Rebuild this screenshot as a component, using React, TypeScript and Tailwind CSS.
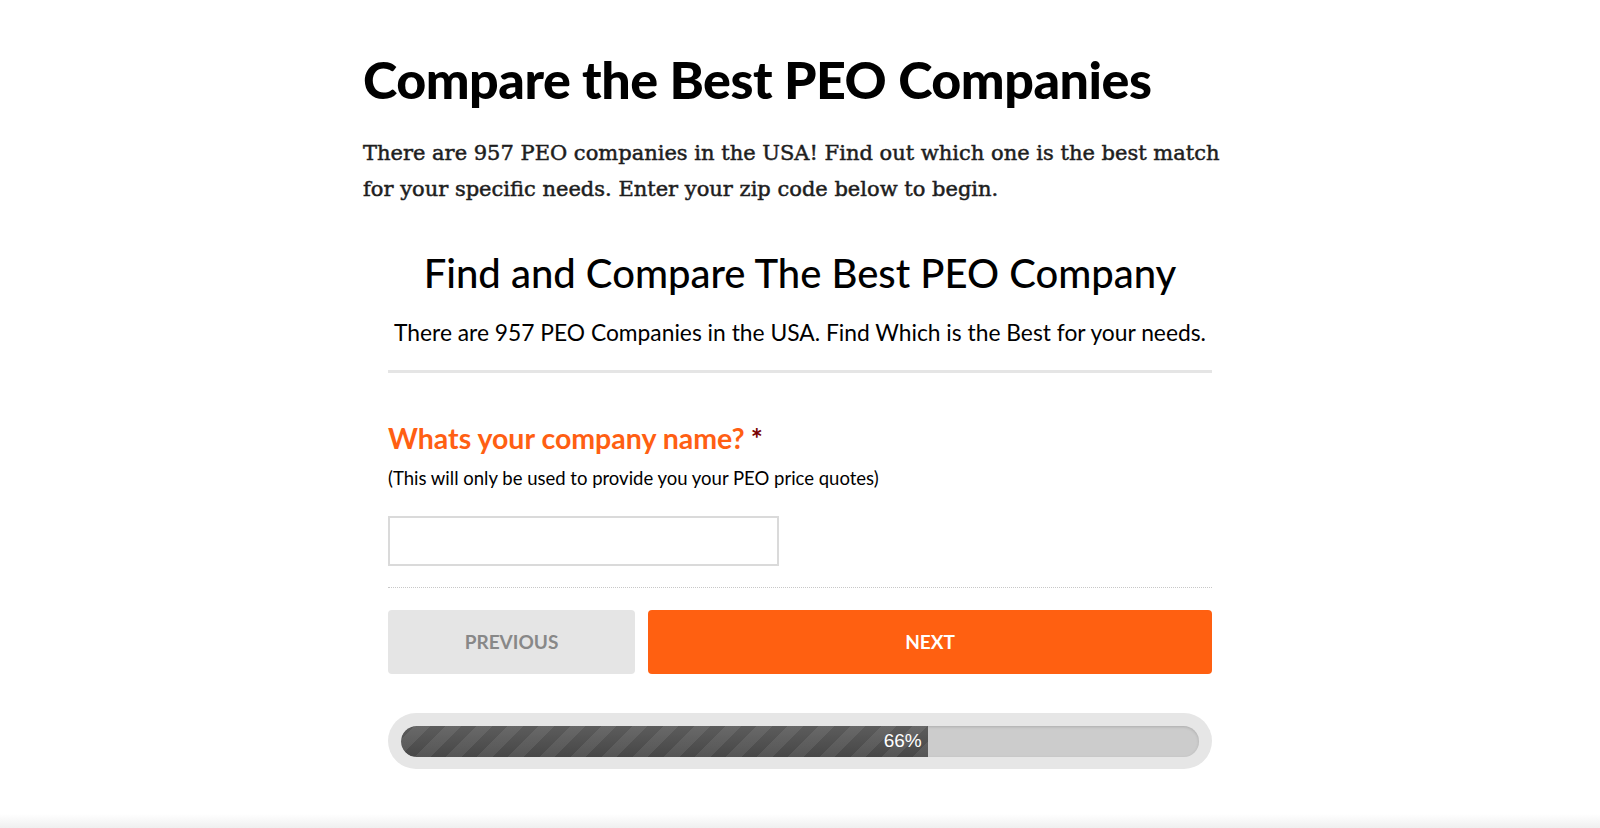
import React from "react";

export default function App() {
  return (
    <div className="min-h-[828px] h-[828px] bg-white flex flex-col overflow-hidden">
      <div className="w-[874px] mx-auto pt-[48px]">
        <h1 className="font-['Lato',sans-serif] font-black text-[52px] leading-[62px] text-black tracking-[-0.5px]">
          Compare the Best PEO Companies
        </h1>
        <p className="mt-[25px] font-['DejaVu_Serif',serif] text-[21px] leading-[36px] text-[#1e1e1e] [-webkit-text-stroke:0.5px_#1e1e1e]">
          There are 957 PEO companies in the USA! Find out which one is the best match for your specific needs. Enter your zip code below to begin.
        </p>
      </div>

      <div className="w-[824px] mx-auto mt-[42px] font-['Lato',sans-serif]">
        <h2 className="text-center text-[40px] leading-[48px] font-medium text-black">
          Find and Compare The Best PEO Company
        </h2>
        <p className="text-center mt-[20px] text-[22.8px] leading-[30px] text-black">
          There are 957 PEO Companies in the USA. Find Which is the Best for your needs.
        </p>
        <div className="mt-[23px] h-[3px] bg-[#e5e5e5]" />

        <div className="mt-[47px]">
          <div className="text-[28.5px] leading-[36px] font-bold text-[#ff5f13]">
            Whats your company name?<span className="ml-[6px] text-[#790000]">*</span>
          </div>
          <div className="mt-[10px] text-[18.5px] leading-[24px] text-black">
            (This will only be used to provide you your PEO price quotes)
          </div>
          <input
            type="text"
            className="mt-[26px] block w-[391px] h-[50px] border-2 border-[#dadada] bg-white outline-none px-2"
          />
        </div>

        <div className="mt-[21px] border-t border-dotted border-[#c8c8c8]" />

        <div className="mt-[22px] flex gap-[13px]">
          <button className="w-[247px] h-[64px] rounded-[4px] bg-[#e5e5e5] text-[#888] font-bold text-[19px] uppercase">
            Previous
          </button>
          <button className="flex-1 h-[64px] rounded-[4px] bg-[#ff6011] text-white font-bold text-[19px] uppercase">
            Next
          </button>
        </div>

        <div className="mt-[39px] h-[56px] rounded-full bg-[#e6e6e6] p-[13px] flex items-center">
          <div className="w-full h-[31px] rounded-full bg-[#cccccc] shadow-[inset_0_1px_3px_rgba(0,0,0,0.15)] overflow-hidden">
            <div
              className="h-full rounded-l-full bg-[linear-gradient(to_bottom,#5c5c5c,#474747)] relative flex items-center justify-end pr-[6px]"
              style={{ width: "66%" }}
            >
              <div className="absolute inset-0 rounded-l-full bg-[repeating-linear-gradient(-45deg,rgba(255,255,255,0.08)_0px,rgba(255,255,255,0.08)_11px,transparent_11px,transparent_22px)]" />
              <span className="relative font-['Liberation_Sans',sans-serif] text-[19px] text-white">66%</span>
            </div>
          </div>
        </div>
      </div>

      <div className="mt-auto h-[14px] bg-[linear-gradient(to_bottom,rgba(255,255,255,0),#efefef)]" />
    </div>
  );
}
